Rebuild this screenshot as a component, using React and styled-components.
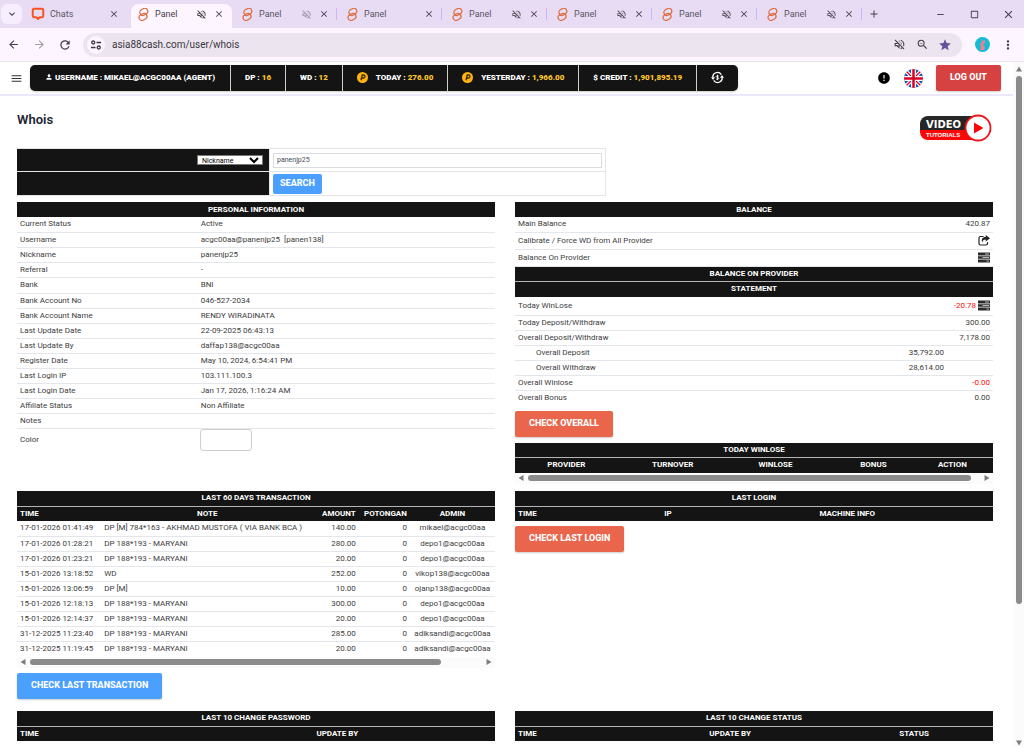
import React from 'react';
import styled, { createGlobalStyle, css } from 'styled-components';
import {
  MdOutlineVolumeOff, MdClose, MdAdd, MdArrowBack, MdArrowForward, MdRefresh, MdZoomOut, MdStar,
  MdMoreVert, MdMenu, MdPerson, MdError, MdKeyboardArrowDown, MdRemove, MdCropSquare,
} from 'react-icons/md';

const Global = createGlobalStyle`
  * { box-sizing: border-box; }
  body { margin: 0; background: #fff; font-family: Roboto, "Liberation Sans", sans-serif; }
  button, input, select { font-family: inherit; }
`;

const ink = '#141414';
const line = '#e3e6ea';

const Window = styled.div`
  height: 100vh;
  display: flex;
  flex-direction: column;
  overflow: hidden;
`;

/* ---------- browser chrome ---------- */
const TabStrip = styled.div`
  height: 28px;
  flex: none;
  display: flex;
  align-items: stretch;
  padding: 0 8px 0 1px;
  background: #e8dcf5;
`;
const IconButton = styled.button`
  display: flex;
  align-items: center;
  justify-content: center;
  flex: none;
  width: ${(p) => p.$w || 16}px;
  padding: 0;
  border: 0;
  background: none;
  color: ${(p) => p.$color || '#454049'};
`;
const TabSearch = styled(IconButton)`
  height: 20px;
  align-self: center;
  border-radius: 6px;
  background: #f6edfd;
`;
const Tab = styled.div`
  flex: 0 1 105px;
  min-width: 0;
  display: flex;
  align-items: center;
  position: relative;
  padding: 0 8px 0 9px;
  gap: 5px;
  font-size: 9px;
  color: #5a5460;
  ${(p) => p.$active && css`
    flex-basis: 101px;
    background: #fdf5ff;
    margin: 4px 0 0 4px;
    padding: 0 8px 4px 6px;
    border-radius: 8px 8px 0 0;
    color: #454049;
  `}
  ${(p) => p.$divided && css`
    &::after {
      content: '';
      position: absolute;
      right: 0;
      top: 8px;
      height: 12px;
      width: 1px;
      background: #cfb4fb;
    }
  `}
`;
const TabName = styled.span`
  flex: 1;
  white-space: nowrap;
`;
const TabIcons = styled.span`
  display: flex;
  align-items: center;
  gap: 6px;
`;
const Spacer = styled.div`
  flex: 1;
`;
const WindowButtons = styled.div`
  display: flex;
  gap: 18px;
`;
const Toolbar = styled.div`
  height: 34px;
  flex: none;
  display: flex;
  align-items: center;
  gap: 10px;
  padding: 0 8px 0 5px;
  background: #fdf5ff;
  border-bottom: 1px solid #ebe3ee;
`;
const Omnibox = styled.div`
  flex: 1;
  height: 24px;
  display: flex;
  align-items: center;
  padding: 0 9px 0 4px;
  gap: 7px;
  border-radius: 12px;
  background: #ece5f0;
`;
const SiteInfo = styled(IconButton)`
  height: 18px;
  border-radius: 9px;
  background: #fdf5ff;
`;
const Address = styled.input`
  flex: 1;
  min-width: 0;
  padding: 0 0 0;
  border: 0;
  outline: 0;
  background: none;
  color: #3b3740;
  font-size: 10px;
`;
const Avatar = styled.button`
  width: 15px;
  height: 15px;
  margin: 0 0 0 3px;
  padding: 0;
  border: 0;
  border-radius: 50%;
  background: #14bcd4;
  display: flex;
  justify-content: center;
  align-items: center;
`;

/* ---------- site header ---------- */
const Viewport = styled.div`
  flex: 1;
  min-height: 0;
  display: flex;
`;
const Page = styled.div`
  flex: 1;
  min-width: 0;
  overflow: hidden;
`;
const Header = styled.header`
  height: 34px;
  display: flex;
  align-items: center;
  padding: 0 12px 0 10px;
  border-bottom: 2px solid #ebe8fb;
`;
const Stats = styled.div`
  display: flex;
  height: 26px;
  margin-left: 7px;
  gap: 1px;
  overflow: hidden;
  border-radius: 5px;
  background: #cfcfcf;
  box-shadow: 0 1px 2px #0003;
`;
const Stat = styled.div`
  display: flex;
  align-items: center;
  gap: 2px;
  padding: 0 ${(p) => p.$pad || 14}px 2px;
  background: ${ink};
  color: #fff;
  font-size: 8px;
  font-weight: 900;
  white-space: nowrap;
  b { color: #ffc62b; font-weight: 900; }
`;
const CoinGap = styled.span`
  width: 4px;
`;
const HeaderTools = styled.div`
  display: flex;
  align-items: center;
  gap: 13px;
`;
const Button = styled.button`
  height: 26px;
  padding: 0 14px 2px;
  border: 0;
  border-radius: 2px;
  background: ${(p) => p.$bg};
  color: #fff;
  font-size: 9px;
  font-weight: 800;
  white-space: nowrap;
  box-shadow: 0 1px 2px #0003;
`;
const SearchButton = styled(Button)`
  height: 20px;
  padding: 0 7px 1px;
  box-shadow: none;
`;

/* ---------- page body ---------- */
const Main = styled.main`
  padding: 14px 20px 0 17px;
`;
const TitleRow = styled.div`
  display: flex;
  justify-content: space-between;
  align-items: flex-start;
  height: 38px;
`;
const Title = styled.h1`
  margin: 2px 0 0;
  font-size: 13px;
  line-height: 16px;
  font-weight: 600;
  color: #1c2430;
`;
const VideoLink = styled.a`
  display: block;
  height: 28px;
  margin: 4px 1px 0 0;
`;
const SearchForm = styled.form`
  max-width: 589px;
  margin-bottom: 6px;
  display: grid;
  grid-template-columns: 253px 1fr;
  border: 1px solid ${line};
  border-left: 0;
`;
const SearchLabel = styled.div`
  height: 23px;
  display: flex;
  align-items: center;
  justify-content: flex-end;
  padding-right: 6px;
  background: ${ink};
  border-right: 1px solid ${line};
  border-bottom: ${(p) => (p.$last ? 0 : `1px solid ${line}`)};
`;
const SearchField = styled.div`
  display: flex;
  align-items: center;
  padding: 0 3px;
  border-bottom: ${(p) => (p.$last ? 0 : `1px solid ${line}`)};
`;
const FieldSelect = styled.select`
  width: 66px;
  height: 10px;
  padding: 0;
  border: 1px solid #777;
  border-radius: 0;
  background: #fff;
  color: #000;
  font-size: 7px;
  line-height: 8px;
`;
const FieldInput = styled.input`
  flex: 1;
  min-width: 0;
  height: 15px;
  padding: 0 3px 1px;
  border: 1px solid #d9dde2;
  color: #444c57;
  font-size: 7px;
`;
const Columns = styled.div`
  display: grid;
  grid-template-columns: minmax(0, 1fr) minmax(0, 1fr);
  column-gap: 20px;
`;
const Panel = styled.section`
  min-height: ${(p) => p.$min || 0}px;
`;
const Table = styled.table`
  width: 100%;
  border-collapse: collapse;
  table-layout: fixed;
  font-size: 8px;
  line-height: 10px;
  color: #3c3c3c;
`;
const HeadRow = styled.tr`
  height: ${(p) => p.$h || 15}px;
  background: ${ink};
  color: #fff;
  & + & { border-top: 1px solid #b5b5b5; }
`;
const Th = styled.th`
  padding: 0 3px;
  font-weight: 700;
  font-size: 8px;
  text-align: ${(p) => p.$align || 'center'};
  white-space: nowrap;
`;
const Row = styled.tr`
  height: ${(p) => p.$h || 15}px;
  border-bottom: 1px solid ${(p) => (p.$plain ? 'transparent' : line)};
`;
const Td = styled.td`
  padding: 0 3px;
  padding-left: ${(p) => (p.$indent ? 21 : 3)}px;
  padding-right: ${(p) => (p.$inset ? 49 : 3)}px;
  text-align: ${(p) => p.$align || 'left'};
  color: ${(p) => (p.$red ? '#ff0a0a' : 'inherit')};
  white-space: pre;
  vertical-align: middle;
  svg { vertical-align: middle; color: #222; }
`;
const ColorBox = styled.button`
  display: block;
  width: 52px;
  height: 22px;
  margin-left: -1px;
  border: 1px solid #cfcfcf;
  border-radius: 3px;
  background: #fff;
`;
const Action = styled.div`
  padding: 5px 0 6px;
`;
const HBar = styled.div`
  height: 11px;
  display: flex;
  align-items: center;
  gap: 4px;
  padding: 0 3px;
  background: #fbfbfb;
`;
const HTrack = styled.div`
  flex: 1;
  display: flex;
`;
const HThumb = styled.div`
  width: ${(p) => p.$size}%;
  height: 6px;
  border-radius: 3px;
  background: #8b8b8b;
`;
const VBar = styled.div`
  width: 11px;
  flex: none;
  display: flex;
  flex-direction: column;
  align-items: center;
  gap: 4px;
  padding: 4px 0 1px;
  background: #fbfbfb;
`;
const VTrack = styled.div`
  flex: 1;
`;
const VThumb = styled.div`
  width: 6px;
  height: 80%;
  border-radius: 3px;
  background: #8b8b8b;
`;

const Arrow = ({ d }) => (
  <svg width="6" height="6" viewBox="0 0 6 6" fill="#7d7d7d"><path d={d} /></svg>
);
const arrows = {
  left: 'M5.5 0V6L.5 3z',
  right: 'M.5 0V6L5.5 3z',
  up: 'M0 5.5H6L3 .5z',
  down: 'M0 .5H6L3 5.5z',
};
const HScroll = ({ size }) => (
  <HBar>
    <Arrow d={arrows.left} />
    <HTrack><HThumb $size={size} /></HTrack>
    <Arrow d={arrows.right} />
  </HBar>
);

const PanelLogo = () => (
  <svg width="13" height="13" viewBox="0 0 24 24" fill="none" stroke="#dd6d3f" strokeWidth="2.3">
    <g transform="rotate(-30 12 12)">
      <rect x="7.500" y="2.500" width="15" height="11" rx="5.500" />
      <rect x="1.500" y="10" width="15" height="11" rx="5.500" />
    </g>
  </svg>
);
const ChatLogo = () => (
  <svg width="14" height="14" viewBox="0 0 24 24" fill="none" stroke="#f8541c" strokeWidth="3.4">
    <path d="M5 3h14a2 2 0 0 1 2 2v10.500a2 2 0 0 1-2 2h-4l-3 3-3-3H5a2 2 0 0 1-2-2V5a2 2 0 0 1 2-2z" strokeLinejoin="round" />
  </svg>
);
const TuneIcon = () => (
  <svg width="12" height="12" viewBox="0 0 24 24" fill="none" stroke="#3b3740" strokeWidth="2.6">
    <circle cx="6.500" cy="7" r="3" /><path d="M13 7h9M2 17h9" /><circle cx="17.500" cy="17" r="3" />
  </svg>
);
const Coin = () => (
  <svg width="11" height="11" viewBox="0 0 22 22">
    <circle cx="11" cy="11" r="11" fill="#ffb30f" />
    <path d="M8 16.500 10.500 6h2.500a3 3 0 0 1 0 6H9.500" fill="none" stroke="#3b2a05" strokeWidth="2.6" />
  </svg>
);
const Exchange = () => (
  <svg width="13" height="13" viewBox="0 0 24 24" fill="none" stroke="#fff" strokeWidth="2.4">
    <path d="M3.500 12.500A8.500 8.500 0 0 1 19 6.500M20.500 11.500A8.500 8.500 0 0 1 5 17.500" />
    <path d="M0 11.500h7.500l-3.700 5zM16.500 12.500H24l-3.700-5z" fill="#fff" stroke="none" />
    <path d="M14.500 9.700c-.8-1.200-5-1.300-5 .6 0 2 5 1.200 5 3.400 0 2-4.400 1.900-5.200.5M12 7v10" strokeWidth="1.600" />
  </svg>
);
const Flag = () => (
  <svg width="19" height="19" viewBox="0 0 38 38">
    <clipPath id="round"><circle cx="19" cy="19" r="19" /></clipPath>
    <g clipPath="url(#round)">
      <path fill="#1456b0" d="M0 0h38v38H0z" />
      <path d="M0 0 38 38M38 0 0 38" stroke="#fff" strokeWidth="7" />
      <path d="M0 0 38 38M38 0 0 38" stroke="#d80027" strokeWidth="2.500" />
      <path d="M19 0v38M0 19h38" stroke="#fff" strokeWidth="10" />
      <path d="M19 0v38M0 19h38" stroke="#d80027" strokeWidth="5" />
    </g>
  </svg>
);
const VideoBadge = () => (
  <svg width="73" height="28" viewBox="0 0 73 28">
    <clipPath id="pill"><rect x="1" y="2" width="66" height="24" rx="8" /></clipPath>
    <g clipPath="url(#pill)">
      <path fill="#262626" d="M0 0h73v16H0z" />
      <path fill="#fb0707" d="M0 16h73v12H0z" />
    </g>
    <text x="7" y="14" fill="#fff" fontFamily="DejaVu Sans, sans-serif" fontWeight="700" fontSize="10">VIDEO</text>
    <text x="7" y="23" fill="#fff" fontFamily="Liberation Sans, sans-serif" fontWeight="700" fontSize="6">TUTORIALS</text>
    <circle cx="59" cy="14" r="12.500" fill="#fff" stroke="#f0141a" strokeWidth="1.800" />
    <path d="M55 8.500v11l9.500-5.500z" fill="#fb0707" />
  </svg>
);
const TasksIcon = () => (
  <svg width="12" height="11" viewBox="0 0 24 22">
    <path fill="#2a2a2a" d="M0 1h24v6H0zM0 8.500h24v5H0zM0 15h24v6H0z" />
    <path fill="#b5b5b5" d="M14 3h8v2h-8zM9 10h13v2H9zM17 17h5v2h-5z" />
  </svg>
);
const ShareIcon = () => (
  <svg width="12" height="11" viewBox="0 0 24 22" fill="none" stroke="#222" strokeWidth="2.400">
    <path d="M11 3H5a3 3 0 0 0-3 3v11a3 3 0 0 0 3 3h11a3 3 0 0 0 3-3v-3" />
    <path d="M15.500 0 24 6.500 15.500 13V9C11 9 9 11 9 15 6 9 8 4 15.500 4z" fill="#222" stroke="none" />
  </svg>
);

const tabs = [
  { name: 'Chats', chat: true },
  { name: 'Panel', muted: true, active: true },
  { name: 'Panel', muted: true, faint: true, divided: true },
  { name: 'Panel', divided: true },
  { name: 'Panel', muted: true, divided: true },
  { name: 'Panel', muted: true, divided: true },
  { name: 'Panel', muted: true, divided: true },
  { name: 'Panel', muted: true, divided: true },
];

const info = [
  ['Current Status', 'Active'],
  ['Username', 'acgc00aa@panenjp25  [panen138]'],
  ['Nickname', 'panenjp25'],
  ['Referral', '-'],
  ['Bank', 'BNI'],
  ['Bank Account No', '046-527-2034'],
  ['Bank Account Name', 'RENDY WIRADINATA'],
  ['Last Update Date', '22-09-2025 06:43:13'],
  ['Last Update By', 'daffap138@acgc00aa'],
  ['Register Date', 'May 10, 2024, 6:54:41 PM'],
  ['Last Login IP', '103.111.100.3'],
  ['Last Login Date', 'Jan 17, 2026, 1:16:24 AM'],
  ['Affiliate Status', 'Non Affiliate'],
  ['Notes', ''],
];

const transactions = [
  ['17-01-2026 01:41:49', 'DP [M] 784*163 - AKHMAD MUSTOFA ( VIA BANK BCA )', '140.00', 'mikael@acgc00aa'],
  ['17-01-2026 01:28:21', 'DP 188*193 - MARYANI', '280.00', 'depo1@acgc00aa'],
  ['17-01-2026 01:23:21', 'DP 188*193 - MARYANI', '20.00', 'depo1@acgc00aa'],
  ['15-01-2026 13:18:52', 'WD', '252.00', 'vikop138@acgc00aa'],
  ['15-01-2026 13:06:59', 'DP [M]', '10.00', 'ojanp138@acgc00aa'],
  ['15-01-2026 12:18:13', 'DP 188*193 - MARYANI', '300.00', 'depo1@acgc00aa'],
  ['15-01-2026 12:14:37', 'DP 188*193 - MARYANI', '20.00', 'depo1@acgc00aa'],
  ['31-12-2025 11:23:40', 'DP 188*193 - MARYANI', '285.00', 'adiksandi@acgc00aa'],
  ['31-12-2025 11:19:45', 'DP 188*193 - MARYANI', '20.00', 'adiksandi@acgc00aa'],
];

const Cols = ({ widths }) => (
  <colgroup>{widths.map((w, i) => <col key={i} width={w} />)}</colgroup>
);

const Heading = ({ title, span, h }) => (
  <HeadRow $h={h}><Th colSpan={span}>{title}</Th></HeadRow>
);

export default function App() {
  return (
    <Window>
      <Global />
      <TabStrip>
        <TabSearch aria-label="Search tabs" $w={21}><MdKeyboardArrowDown size={12} /></TabSearch>
        {tabs.map((t, i) => (
          <Tab key={i} $active={t.active} $divided={t.divided}>
            {t.chat ? <ChatLogo /> : <PanelLogo />}
            <TabName>{t.name}</TabName>
            <TabIcons>
              {t.muted && <MdOutlineVolumeOff size={11} opacity={t.faint ? 0.5 : 1} />}
              <IconButton aria-label="Close tab" $w={11}><MdClose size={10} /></IconButton>
            </TabIcons>
          </Tab>
        ))}
        <IconButton aria-label="New tab" $w={24}><MdAdd size={12} /></IconButton>
        <Spacer />
        <WindowButtons>
          <IconButton aria-label="Minimize"><MdRemove size={11} /></IconButton>
          <IconButton aria-label="Maximize"><MdCropSquare size={11} /></IconButton>
          <IconButton aria-label="Close"><MdClose size={13} /></IconButton>
        </WindowButtons>
      </TabStrip>
      <Toolbar>
        <IconButton aria-label="Back"><MdArrowBack size={13} /></IconButton>
        <IconButton aria-label="Forward" $color="#a49daa"><MdArrowForward size={13} /></IconButton>
        <IconButton aria-label="Reload"><MdRefresh size={14} /></IconButton>
        <Omnibox>
          <SiteInfo aria-label="Site information" $w={18}><TuneIcon /></SiteInfo>
          <Address aria-label="Address" defaultValue="asia88cash.com/user/whois" />
          <IconButton aria-label="Muted"><MdOutlineVolumeOff size={13} /></IconButton>
          <IconButton aria-label="Zoom"><MdZoomOut size={13} /></IconButton>
          <IconButton aria-label="Bookmark" $color="#65529c"><MdStar size={14} /></IconButton>
        </Omnibox>
        <Avatar aria-label="Profile">
          <svg width="7" height="11" viewBox="0 0 7 11"><path d="M2 0l2 2 2-1v3L4 6l2 2-1 3H1l1-3-1-3 2-2z" fill="#ef7f91" /></svg>
        </Avatar>
        <IconButton aria-label="Menu"><MdMoreVert size={14} /></IconButton>
      </Toolbar>
      <Viewport>
        <Page>
          <Header>
            <IconButton aria-label="Toggle menu" $w={13} $color="#333"><MdMenu size={13} /></IconButton>
            <Stats>
              <Stat $pad={15}><MdPerson size={8} />USERNAME : MIKAEL@ACGC00AA (AGENT)</Stat>
              <Stat>DP : <b>16</b></Stat>
              <Stat>WD : <b>12</b></Stat>
              <Stat><Coin /><CoinGap />TODAY : <b>276.00</b></Stat>
              <Stat><Coin /><CoinGap />YESTERDAY : <b>1,966.00</b></Stat>
              <Stat>$ CREDIT : <b>1,901,895.19</b></Stat>
              <Stat><Exchange /></Stat>
            </Stats>
            <Spacer />
            <HeaderTools>
              <IconButton aria-label="Notices" $color="#000" $w={14}><MdError size={14} /></IconButton>
              <IconButton aria-label="Language" $w={19}><Flag /></IconButton>
              <Button $bg="#d64242">LOG OUT</Button>
            </HeaderTools>
          </Header>
          <Main>
            <TitleRow>
              <Title>Whois</Title>
              <VideoLink href="#video" aria-label="Video tutorials"><VideoBadge /></VideoLink>
            </TitleRow>
            <SearchForm onSubmit={(e) => e.preventDefault()}>
              <SearchLabel>
                <FieldSelect aria-label="Search by" defaultValue="Nickname"><option>Nickname</option></FieldSelect>
              </SearchLabel>
              <SearchField><FieldInput aria-label="Search value" defaultValue="panenjp25" /></SearchField>
              <SearchLabel $last />
              <SearchField $last><SearchButton $bg="#4ba0ff">SEARCH</SearchButton></SearchField>
            </SearchForm>
            <Columns>
              <Panel $min={289}>
                <Table>
                  <Cols widths={['37.8%', '62.2%']} />
                  <thead><Heading title="PERSONAL INFORMATION" span={2} /></thead>
                  <tbody>
                    {info.map(([k, v], i) => (
                      <Row key={k} $h={i === 4 ? 16 : 15}><Td>{k}</Td><Td>{v}</Td></Row>
                    ))}
                    <Row $h={24} $plain><Td>Color</Td><Td><ColorBox aria-label="Color" /></Td></Row>
                  </tbody>
                </Table>
              </Panel>
              <Panel>
                <Table>
                  <Cols widths={['60%', '40%']} />
                  <thead><Heading title="BALANCE" span={2} /></thead>
                  <tbody>
                    <Row><Td>Main Balance</Td><Td $align="right">420.87</Td></Row>
                    <Row $h={17}><Td>Calibrate / Force WD from All Provider</Td><Td $align="right"><ShareIcon /></Td></Row>
                    <Row $h={17}><Td>Balance On Provider</Td><Td $align="right"><TasksIcon /></Td></Row>
                    <Heading title="BALANCE ON PROVIDER" span={2} />
                    <Heading title="STATEMENT" span={2} h={16} />
                    <Row $h={18}><Td>Today WinLose</Td><Td $align="right" $red>-20.78 <TasksIcon /></Td></Row>
                    <Row><Td>Today Deposit/Withdraw</Td><Td $align="right">300.00</Td></Row>
                    <Row><Td>Overall Deposit/Withdraw</Td><Td $align="right">7,178.00</Td></Row>
                    <Row><Td $indent>Overall Deposit</Td><Td $align="right" $inset>35,792.00</Td></Row>
                    <Row><Td $indent>Overall Withdraw</Td><Td $align="right" $inset>28,614.00</Td></Row>
                    <Row><Td>Overall Winlose</Td><Td $align="right" $red>-0.00</Td></Row>
                    <Row $plain><Td>Overall Bonus</Td><Td $align="right">0.00</Td></Row>
                  </tbody>
                </Table>
                <Action><Button $bg="#e9654b">CHECK OVERALL</Button></Action>
                <Table>
                  <Cols widths={['21.5%', '23%', '20%', '21%', '12%', '2.5%']} />
                  <thead>
                    <Heading title="TODAY WINLOSE" span={6} />
                    <HeadRow><Th>PROVIDER</Th><Th>TURNOVER</Th><Th>WINLOSE</Th><Th>BONUS</Th><Th>ACTION</Th><Th /></HeadRow>
                  </thead>
                </Table>
                <HScroll size={98} />
              </Panel>
              <Panel $min={220}>
                <Table>
                  <Cols widths={['17.6%', '44.4%', '9.5%', '10.7%', '17.8%']} />
                  <thead>
                    <Heading title="LAST 60 DAYS TRANSACTION" span={5} />
                    <HeadRow><Th $align="left">TIME</Th><Th>NOTE</Th><Th $align="right">AMOUNT</Th><Th $align="right">POTONGAN</Th><Th>ADMIN</Th></HeadRow>
                  </thead>
                  <tbody>
                    {transactions.map(([time, note, amount, admin], i) => (
                      <Row key={time} $plain={i === 8}>
                        <Td>{time}</Td><Td>{note}</Td><Td $align="right">{amount}</Td><Td $align="right">0</Td><Td $align="center">{admin}</Td>
                      </Row>
                    ))}
                  </tbody>
                </Table>
                <HScroll size={91} />
                <Action><Button $bg="#4ba0ff">CHECK LAST TRANSACTION</Button></Action>
              </Panel>
              <Panel>
                <Table>
                  <Cols widths={['22%', '20%', '55%', '3%']} />
                  <thead>
                    <Heading title="LAST LOGIN" span={4} />
                    <HeadRow><Th $align="left">TIME</Th><Th>IP</Th><Th>MACHINE INFO</Th><Th /></HeadRow>
                  </thead>
                </Table>
                <Action><Button $bg="#e9654b">CHECK LAST LOGIN</Button></Action>
              </Panel>
              <Panel>
                <Table>
                  <Cols widths={['34%', '66%']} />
                  <thead>
                    <Heading title="LAST 10 CHANGE PASSWORD" span={2} />
                    <HeadRow><Th $align="left">TIME</Th><Th>UPDATE BY</Th></HeadRow>
                  </thead>
                </Table>
              </Panel>
              <Panel>
                <Table>
                  <Cols widths={['23%', '44%', '33%']} />
                  <thead>
                    <Heading title="LAST 10 CHANGE STATUS" span={3} />
                    <HeadRow><Th $align="left">TIME</Th><Th>UPDATE BY</Th><Th>STATUS</Th></HeadRow>
                  </thead>
                </Table>
              </Panel>
            </Columns>
          </Main>
        </Page>
        <VBar>
          <Arrow d={arrows.up} />
          <VTrack><VThumb /></VTrack>
          <Arrow d={arrows.down} />
        </VBar>
      </Viewport>
    </Window>
  );
}
